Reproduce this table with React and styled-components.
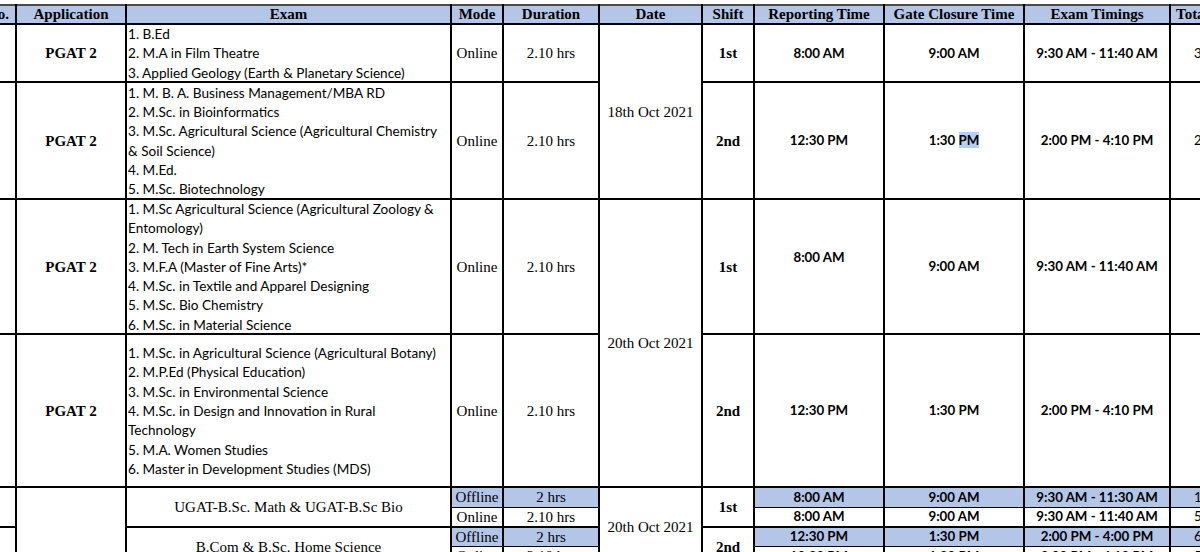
import React from "react";
import styled, { createGlobalStyle } from "styled-components";

const serif = `"Liberation Serif", "DejaVu Serif", serif`;
const sans = `Lato, "Open Sans", "Liberation Sans", sans-serif`;
const blue = "#b4c6e7";

const GlobalStyle = createGlobalStyle`
  html, body {
    margin: 0;
    padding: 0;
    background: #fff;
  }
`;

const Page = styled.div`
  width: 1200px;
  height: 552px;
  overflow: hidden;
  padding-top: 4px;
  box-sizing: border-box;
  background: #fff;
`;

const Table = styled.table`
  border-collapse: collapse;
  table-layout: fixed;
  width: 1296px;
  margin-left: -37px;
  color: #000;
`;

const Row = styled.tr`
  height: ${(p) => p.$h}px;
`;

const HeadRow = styled.tr`
  height: 19px;
  background: ${blue};
`;

const Head = styled.th`
  border: 2px solid #000;
  border-top-color: #4a4a4a;
  padding: 0 2px;
  font-family: ${serif};
  font-weight: 700;
  font-size: 15px;
  line-height: 17px;
  white-space: nowrap;
  overflow: hidden;
  text-align: ${(p) => (p.$left ? "left" : "center")};
  padding-left: ${(p) => (p.$left ? "5px" : "2px")};
`;

const Cell = styled.td`
  border: 2px solid #000;
  border-top-width: ${(p) => (p.$splitTop ? "1px" : "2px")};
  border-bottom-width: ${(p) => (p.$splitBottom ? "1px" : "2px")};
  padding: 0 2px;
  text-align: center;
  vertical-align: middle;
  white-space: nowrap;
  overflow: hidden;
  background: ${(p) => (p.$blue ? blue : "#fff")};
`;

const SerifCell = styled(Cell)`
  font-family: ${serif};
  font-size: 15px;
  font-weight: ${(p) => (p.$bold ? 700 : 400)};
  line-height: 17px;
  padding-top: 1px;
`;

const TimeCell = styled(Cell)`
  font-family: ${sans};
  font-size: 13.3px;
  font-weight: 700;
  line-height: 17px;
  padding-bottom: ${(p) => (p.$raise ? "18px" : "0")};
`;

const TotalCell = styled(Cell)`
  font-family: ${sans};
  font-size: 13.3px;
  line-height: 17px;
  text-align: left;
  padding-left: 23px;
`;

const ListCell = styled(Cell)`
  text-align: left;
  padding: 0 1px;
  font-family: ${sans};
  font-size: 13.6px;
  line-height: 19.3px;
`;

const Lines = styled.div`
  margin: 0 0 -2px;
`;

const Line = styled.div`
  white-space: nowrap;
`;

const Selected = styled.span`
  background: #b3d1f2;
`;

const pgat = [
  {
    no: "1",
    h: 58,
    lines: ["1. B.Ed", "2. M.A in Film Theatre", "3. Applied Geology (Earth & Planetary Science)"],
    date: "18th Oct 2021",
    dateSpan: 2,
    shift: "1st",
    report: "8:00 AM",
    gate: "9:00 AM",
    timing: "9:30 AM - 11:40 AM",
    total: "3416",
  },
  {
    no: "2",
    h: 117,
    lines: [
      "1. M. B. A. Business Management/MBA RD",
      "2. M.Sc. in Bioinformatics",
      "3. M.Sc. Agricultural Science (Agricultural Chemistry",
      "& Soil Science)",
      "4. M.Ed.",
      "5. M.Sc. Biotechnology",
    ],
    shift: "2nd",
    report: "12:30 PM",
    gate: (
      <>
        1:30 <Selected>PM</Selected>
      </>
    ),
    timing: "2:00 PM - 4:10 PM",
    total: "2185",
  },
  {
    no: "3",
    h: 135,
    lines: [
      "1. M.Sc Agricultural Science (Agricultural Zoology &",
      "Entomology)",
      "2. M. Tech in Earth System Science",
      "3. M.F.A (Master of Fine Arts)*",
      "4. M.Sc. in Textile and Apparel Designing",
      "5. M.Sc. Bio Chemistry",
      "6. M.Sc. in Material Science",
    ],
    date: "20th Oct 2021",
    dateSpan: 2,
    shift: "1st",
    report: "8:00 AM",
    raise: true,
    gate: "9:00 AM",
    timing: "9:30 AM - 11:40 AM",
    total: "",
  },
  {
    no: "4",
    h: 153,
    lines: [
      "1. M.Sc. in Agricultural Science (Agricultural Botany)",
      "2. M.P.Ed (Physical Education)",
      "3. M.Sc. in Environmental Science",
      "4. M.Sc. in Design and Innovation in Rural",
      "Technology",
      "5. M.A. Women Studies",
      "6. Master in Development Studies (MDS)",
    ],
    shift: "2nd",
    report: "12:30 PM",
    gate: "1:30 PM",
    timing: "2:00 PM - 4:10 PM",
    total: "",
  },
];

const ugat = [
  {
    no: "5",
    exam: "UGAT-B.Sc. Math & UGAT-B.Sc Bio",
    shift: "1st",
    first: true,
    subs: [
      { mode: "Offline", dur: "2 hrs", report: "8:00 AM", gate: "9:00 AM", timing: "9:30 AM - 11:30 AM", total: "1254", h: 20 },
      { mode: "Online", dur: "2.10 hrs", report: "8:00 AM", gate: "9:00 AM", timing: "9:30 AM - 11:40 AM", total: "5326", h: 19 },
    ],
  },
  {
    no: "6",
    exam: "B.Com & B.Sc. Home Science",
    shift: "2nd",
    subs: [
      { mode: "Offline", dur: "2 hrs", report: "12:30 PM", gate: "1:30 PM", timing: "2:00 PM - 4:00 PM", total: "6118", h: 20 },
      { mode: "Online", dur: "2.10 hrs", report: "12:30 PM", gate: "1:30 PM", timing: "2:00 PM - 4:10 PM", total: "5472", h: 20 },
    ],
  },
];

const widths = [52, 110, 325, 52, 96, 103, 52, 130, 140, 146, 90];

export default function App() {
  return (
    <Page>
      <GlobalStyle />
      <Table>
        <colgroup>
          {widths.map((w, i) => (
            <col key={i} style={{ width: w }} />
          ))}
        </colgroup>
        <thead>
          <HeadRow>
            <Head>S. No.</Head>
            <Head>Application</Head>
            <Head>Exam</Head>
            <Head>Mode</Head>
            <Head>Duration</Head>
            <Head>Date</Head>
            <Head>Shift</Head>
            <Head>Reporting Time</Head>
            <Head>Gate Closure Time</Head>
            <Head>Exam Timings</Head>
            <Head $left>Total Candidates</Head>
          </HeadRow>
        </thead>
        <tbody>
          {pgat.map((r) => (
            <Row key={r.no} $h={r.h}>
              <SerifCell>{r.no}</SerifCell>
              <SerifCell $bold>PGAT 2</SerifCell>
              <ListCell>
                <Lines>
                  {r.lines.map((l) => (
                    <Line key={l}>{l}</Line>
                  ))}
                </Lines>
              </ListCell>
              <SerifCell>Online</SerifCell>
              <SerifCell>2.10 hrs</SerifCell>
              {r.date && <SerifCell rowSpan={r.dateSpan}>{r.date}</SerifCell>}
              <SerifCell $bold>{r.shift}</SerifCell>
              <TimeCell $raise={r.raise}>{r.report}</TimeCell>
              <TimeCell>{r.gate}</TimeCell>
              <TimeCell>{r.timing}</TimeCell>
              <TotalCell>{r.total}</TotalCell>
            </Row>
          ))}
          {ugat.map((g) =>
            g.subs.map((s, i) => (
              <Row key={g.no + s.mode} $h={s.h}>
                {i === 0 && <SerifCell rowSpan={2}>{g.no}</SerifCell>}
                {g.first && i === 0 && <SerifCell rowSpan={4} />}
                {i === 0 && <SerifCell rowSpan={2}>{g.exam}</SerifCell>}
                <SerifCell $blue={i === 0} $splitBottom={i === 0} $splitTop={i === 1}>
                  {s.mode}
                </SerifCell>
                <SerifCell $blue={i === 0} $splitBottom={i === 0} $splitTop={i === 1}>
                  {s.dur}
                </SerifCell>
                {g.first && i === 0 && <SerifCell rowSpan={4}>20th Oct 2021</SerifCell>}
                {i === 0 && (
                  <SerifCell rowSpan={2} $bold>
                    {g.shift}
                  </SerifCell>
                )}
                <TimeCell $blue={i === 0} $splitBottom={i === 0} $splitTop={i === 1}>
                  {s.report}
                </TimeCell>
                <TimeCell $blue={i === 0} $splitBottom={i === 0} $splitTop={i === 1}>
                  {s.gate}
                </TimeCell>
                <TimeCell $blue={i === 0} $splitBottom={i === 0} $splitTop={i === 1}>
                  {s.timing}
                </TimeCell>
                <TotalCell $blue={i === 0} $splitBottom={i === 0} $splitTop={i === 1}>
                  {s.total}
                </TotalCell>
              </Row>
            ))
          )}
        </tbody>
      </Table>
    </Page>
  );
}
